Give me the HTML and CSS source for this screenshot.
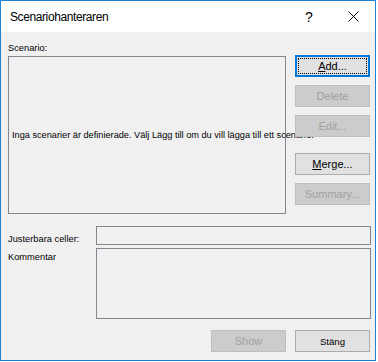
FILE: index.html
```html
<!DOCTYPE html>
<html lang="sv">
<head>
  <meta charset="UTF-8">
  <meta name="viewport" content="width=device-width, initial-scale=1.0">
  <title>Scenariohanteraren</title>
  <link rel="stylesheet" href="styles.css">
</head>
<body>

  <div class="dialog">
    <div class="titlebar">
      <span class="title">Scenariohanteraren</span>
      <span class="caption-btn help">?</span>
      <span class="caption-btn close">
        <svg width="11" height="11" viewBox="0 0 11 11"><path d="M0.5 0.5L10.5 10.5M10.5 0.5L0.5 10.5" stroke="#000" stroke-width="1" fill="none"/></svg>
      </span>
    </div>

    <div class="content">
      <div class="main">
        <div class="scenario">
          <div class="label">Scenario:</div>
          <div class="listbox">
            <span class="empty">Inga scenarier är definierade. Välj Lägg till om du vill lägga till ett scenario.</span>
          </div>
        </div>
        <div class="side-buttons">
          <button class="btn default"><u>A</u>dd...</button>
          <button class="btn" disabled>Delete</button>
          <button class="btn" disabled>Edit...</button>
          <button class="btn spaced"><u>M</u>erge...</button>
          <button class="btn" disabled>Summary...</button>
        </div>
      </div>

      <div class="fields">
        <label class="field-label cells">Justerbara celler:</label>
        <div class="textbox"></div>
        <label class="field-label comment">Kommentar</label>
        <div class="textbox"></div>
      </div>

      <div class="footer">
        <button class="btn" disabled>Show</button>
        <button class="btn close-text">Stäng</button>
      </div>
    </div>
  </div>

</body>
</html>
```

FILE: styles.css
```css
body {
  margin: 0;
  background: #fff;
  font-family: 'Liberation Sans', Arial, sans-serif;
  color: #000;
}

.dialog {
  width: 376px;
  height: 361px;
  box-sizing: border-box;
  border: 1px solid #1883d7;
  background: #f0f0f0;
}

.titlebar {
  height: 31px;
  background: #fff;
  display: flex;
  align-items: center;
}

.title {
  flex: 1;
  padding-left: 9px;
  font-size: 12px;
  letter-spacing: -0.4px;
}

.caption-btn {
  width: 44px;
  height: 31px;
  display: flex;
  align-items: center;
  justify-content: center;
}

.help {
  font-size: 14px;
}

.close svg {
  display: block;
}

.content {
  padding: 10px 5px 0 7px;
}

.main {
  display: grid;
  grid-template-columns: 278px 75px;
  column-gap: 9px;
}

.label {
  font-size: 9.3px;
  line-height: 12px;
  margin-bottom: 2px;
}

.listbox {
  height: 158px;
  box-sizing: border-box;
  border: 1px solid #828790;
  display: flex;
  align-items: center;
}

.empty {
  padding-left: 3px;
  font-size: 9.2px;
  white-space: nowrap;
}

.side-buttons {
  margin-top: 13px;
  display: flex;
  flex-direction: column;
  gap: 8px;
}

.btn {
  width: 75px;
  height: 22px;
  padding: 0;
  box-sizing: border-box;
  border: 1px solid #adadad;
  border-radius: 0;
  background: #e1e1e1;
  font-family: 'Liberation Sans', Arial, sans-serif;
  font-size: 11px;
  color: #000;
}

.btn:disabled {
  background: #cccccc;
  border-color: #bfbfbf;
  color: #a0a0a0;
}

.btn.default {
  border: 2px solid #0078d7;
  outline: 1px dotted #000;
  outline-offset: -4px;
}

.btn.spaced {
  margin-top: 8px;
}

.btn.close-text {
  font-size: 9.6px;
}

.fields {
  margin-top: 12px;
  display: grid;
  grid-template-columns: 88px 275px;
  grid-template-rows: 19px 71px;
  row-gap: 3px;
}

.field-label {
  font-size: 9.3px;
  line-height: 12px;
}

.field-label.cells {
  padding-top: 7px;
}

.field-label.comment {
  padding-top: 3px;
}

.textbox {
  box-sizing: border-box;
  border: 1px solid #828790;
}

.footer {
  margin-top: 11px;
  display: flex;
  justify-content: flex-end;
  gap: 9px;
}
```
